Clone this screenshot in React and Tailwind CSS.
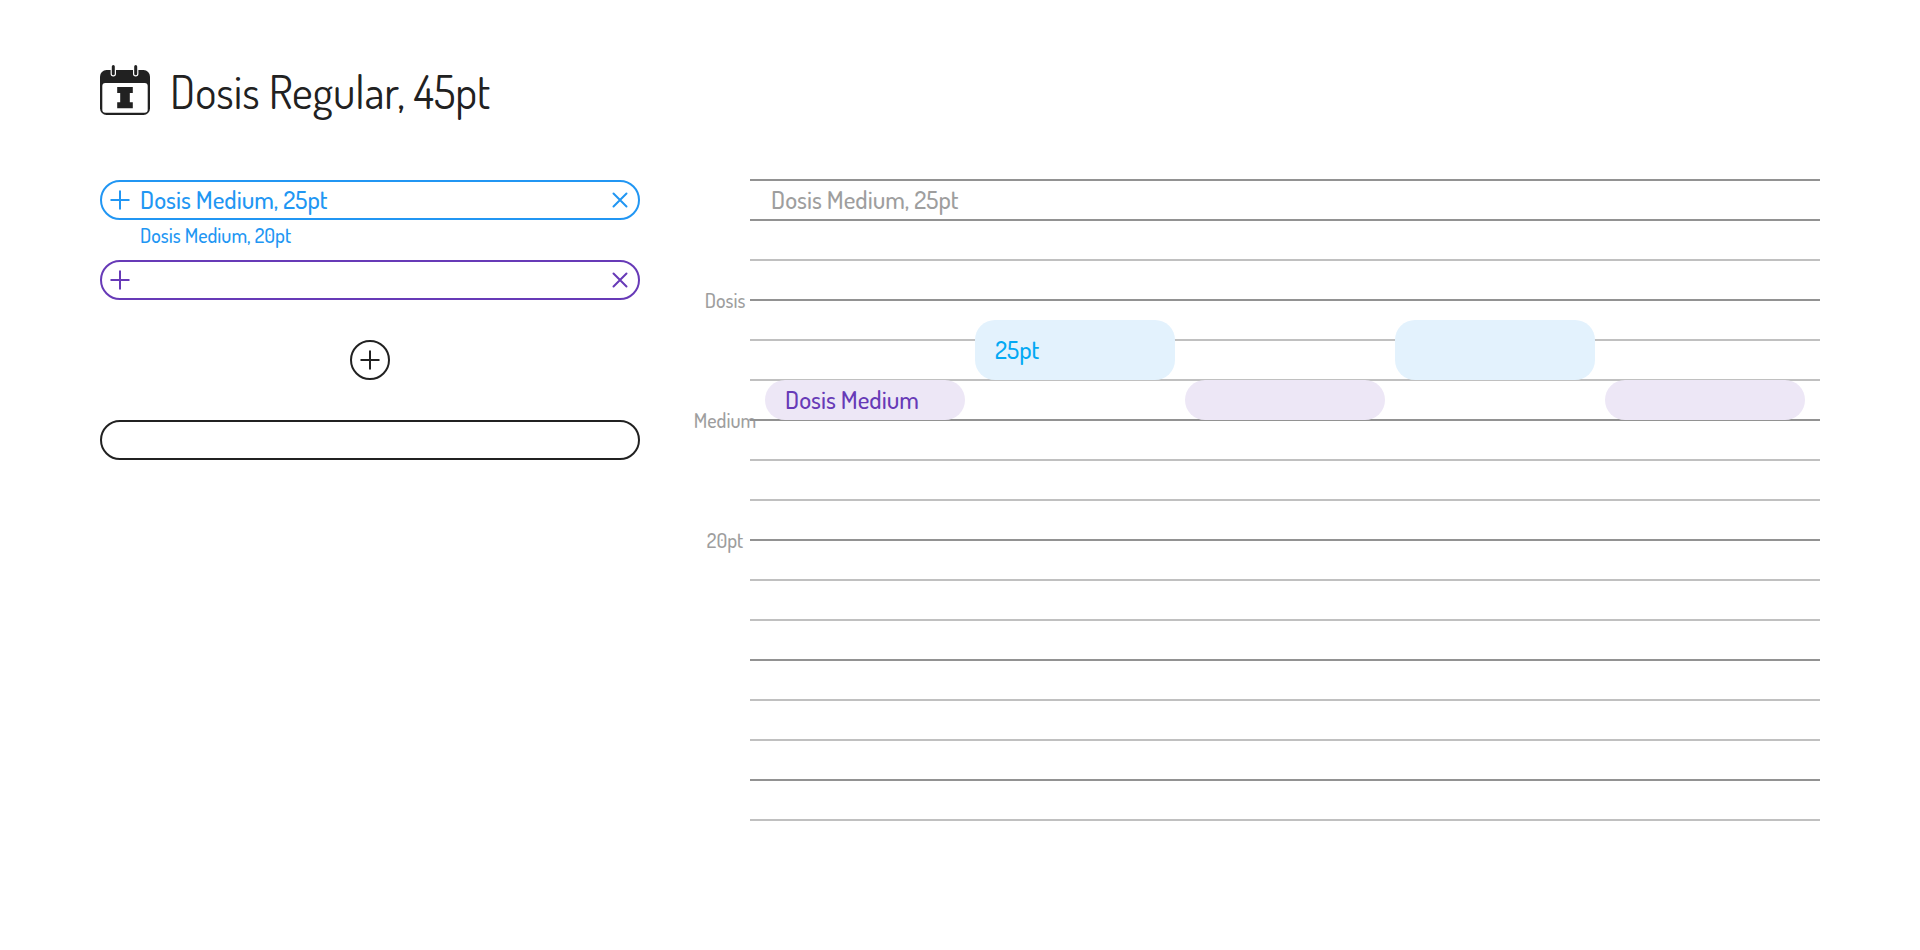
const hourLabels = [
  { text: 'Dosis', row: 'row-[7]' },
  { text: 'Medium', row: 'row-[13]' },
  { text: '20pt', row: 'row-[19]' },
];

const events = [
  { day: 1, text: 'Dosis Medium', place: 'col-start-1 row-[11/span_2]', tone: 'bg-[#ede7f6] text-[#673ab7]' },
  { day: 2, text: '25pt', place: 'col-start-2 row-[8/span_3]', tone: 'bg-[#e3f2fd] text-[#03a9f4]' },
  { day: 3, text: '', place: 'col-start-3 row-[11/span_2]', tone: 'bg-[#ede7f6] text-[#673ab7]' },
  { day: 4, text: '', place: 'col-start-4 row-[8/span_3]', tone: 'bg-[#e3f2fd] text-[#03a9f4]' },
  { day: 5, text: '', place: 'col-start-5 row-[11/span_2]', tone: 'bg-[#ede7f6] text-[#673ab7]' },
];

const isMajorLine = (i) => i === 1 || i % 3 === 0;

function Logo() {
  return (
    <svg viewBox="0 0 50 50" className="size-[50px] shrink-0" aria-hidden="true">
      <rect x="0" y="5" width="50" height="45" rx="6.5" fill="#212121" />
      <rect x="2.3" y="18" width="45.4" height="29.7" rx="3" fill="#fff" />
      <path
        d="M13.3 1.6v7.2M35.7 1.6v7.2"
        stroke="#fff"
        strokeWidth="5.4"
        strokeLinecap="round"
      />
      <path
        d="M13.3 1.6v7.2M35.7 1.6v7.2"
        stroke="#212121"
        strokeWidth="3"
        strokeLinecap="round"
      />
      <path d="M17.2 22h15.6v6h-3v9.3h3v6H17.2v-6h3V28h-3z" fill="#212121" />
    </svg>
  );
}

function Plus() {
  return (
    <svg viewBox="0 0 20 20" className="size-5" fill="none" stroke="currentColor" strokeWidth="2" aria-hidden="true">
      <path d="M10 0.5v19M0.5 10h19" />
    </svg>
  );
}

function Cross() {
  return (
    <svg viewBox="0 0 20 20" className="size-5" fill="none" stroke="currentColor" strokeWidth="2" strokeLinecap="round" aria-hidden="true">
      <path d="M3.5 3.5l13 13M16.5 3.5l-13 13" />
    </svg>
  );
}

function CourseField({ label, value, tone }) {
  return (
    <div className={`flex h-10 items-center gap-2.5 rounded-full border-2 px-2 ${tone}`}>
      <button type="button" aria-label={`Add to ${label}`}>
        <Plus />
      </button>
      <input
        type="text"
        aria-label={label}
        defaultValue={value}
        className="h-9 min-w-0 flex-1 bg-transparent text-[25px] font-medium outline-none"
      />
      <button type="button" aria-label={`Remove ${label}`}>
        <Cross />
      </button>
    </div>
  );
}

function Timetable() {
  return (
    <section aria-label="Timetable" className="grid grid-cols-[50px_minmax(0,1fr)]">
      <div className="grid auto-rows-[20px] grid-cols-[minmax(0,1fr)]">
        {hourLabels.map(({ text, row }) => (
          <span
            key={text}
            className={`flex h-0 items-center justify-center text-xl font-medium text-[#9e9e9e] ${row}`}
          >
            {text}
          </span>
        ))}
      </div>
      <div className="grid">
        <div className="col-start-1 row-start-1 -mt-px">
          {Array.from({ length: 17 }, (_, i) => (
            <div
              key={i}
              className={`h-10 border-t-2 ${isMajorLine(i) ? 'border-[#929292]' : 'border-[#c0c0c0]'}`}
            >
              {i === 0 && (
                <h2 className="px-[21px] text-[25px] leading-9 font-medium text-[#9e9e9e]">
                  Dosis Medium, 25pt
                </h2>
              )}
            </div>
          ))}
        </div>
        <div className="col-start-1 row-start-1 grid auto-rows-[20px] grid-cols-5 gap-x-2.5 px-[15px]">
          {events.map(({ day, text, place, tone }) => (
            <div
              key={day}
              className={`flex items-center rounded-[20px] px-5 pb-0.5 text-[25px] leading-8 font-medium ${place} ${tone}`}
            >
              {text}
            </div>
          ))}
        </div>
      </div>
    </section>
  );
}

export default function App() {
  return (
    <div className="min-h-screen bg-white px-[100px] pt-[65px] font-[Dosis,'Roboto_Condensed',Roboto,sans-serif] text-[#212121]">
      <header className="flex h-[50px] items-center gap-5">
        <Logo />
        <h1 className="pt-1 text-[45px] leading-[50px]">Dosis Regular, 45pt</h1>
      </header>
      <main className="mt-[65px] grid grid-cols-[minmax(0,54fr)_minmax(0,112fr)] gap-x-[60px]">
        <section aria-label="Courses" className="flex flex-col">
          <CourseField label="First course" value="Dosis Medium, 25pt" tone="border-[#2196f3] text-[#2196f3]" />
          <p className="h-10 pl-10 text-xl leading-[30px] font-medium text-[#2196f3]">Dosis Medium, 20pt</p>
          <CourseField label="Second course" value="" tone="border-[#673ab7] text-[#673ab7]" />
          <button
            type="button"
            aria-label="Add course"
            className="my-10 flex size-10 items-center justify-center self-center rounded-full border-2 border-[#212121]"
          >
            <Plus />
          </button>
          <input
            type="text"
            aria-label="Schedule name"
            className="h-10 rounded-full border-2 border-[#212121] px-10 text-[25px] font-medium outline-none"
          />
        </section>
        <Timetable />
      </main>
    </div>
  );
}
